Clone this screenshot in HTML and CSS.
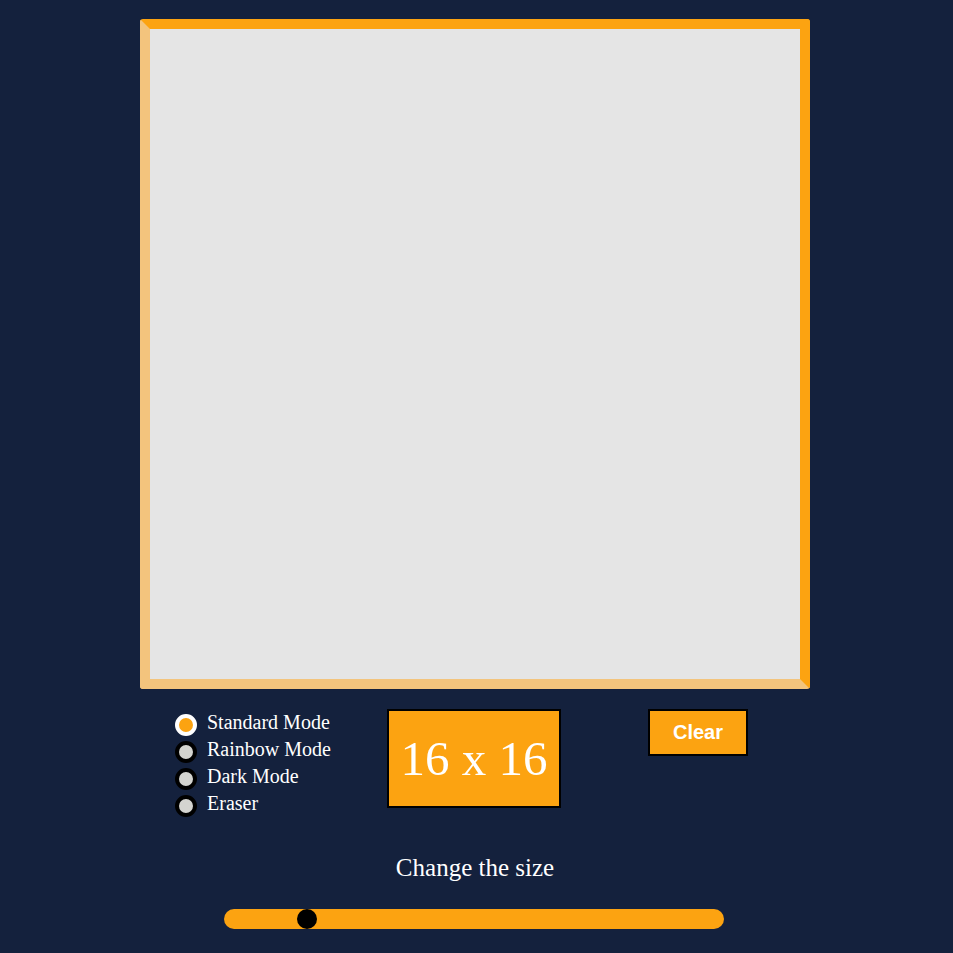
FILE: index.html
```html
<!DOCTYPE html>
<html lang="en">
<head>
<meta charset="utf-8">
<title>Etch-a-Sketch</title>
<link rel="stylesheet" href="styles.css">
</head>
<body>
<main class="app">
  <div class="board"></div>
  <div class="controls">
    <div class="modes">
      <label class="mode"><input type="radio" name="mode" checked><span>Standard Mode</span></label>
      <label class="mode"><input type="radio" name="mode"><span>Rainbow Mode</span></label>
      <label class="mode"><input type="radio" name="mode"><span>Dark Mode</span></label>
      <label class="mode"><input type="radio" name="mode"><span>Eraser</span></label>
    </div>
    <div class="count">16 x 16</div>
    <button class="clear">Clear</button>
  </div>
  <p class="size-label">Change the size</p>
  <div class="slider-row">
    <input class="slider" type="range" min="1" max="100" value="16">
  </div>
</main>
</body>
</html>
```
FILE: styles.css
```css
html, body {
  margin: 0;
  background: #14213d;
}
body {
  font-family: "Liberation Serif", "Times New Roman", serif;
  color: #ffffff;
}
.app {
  width: 670px;
  margin-left: 140px;
  padding-top: 19px;
}
.board {
  box-sizing: border-box;
  width: 670px;
  height: 670px;
  border: 10px solid;
  border-color: #fca311 #fca311 #f3c47d #f3c47d;
  border-radius: 3px;
  background: #e5e5e5;
}
.controls {
  display: flex;
  align-items: flex-start;
  margin-top: 20px;
  padding-left: 35px;
}
.modes {
  width: 212px;
  padding-top: 2px;
}
.mode {
  display: flex;
  align-items: flex-start;
  height: 27px;
  font-size: 20px;
  line-height: 23px;
}
.mode input {
  appearance: none;
  -webkit-appearance: none;
  box-sizing: border-box;
  width: 22px;
  height: 22px;
  margin: 3px 10px 0 0;
  border: 4px solid #000;
  border-radius: 50%;
  background: #d4d4d0;
}
.mode input:checked {
  border-color: #ffffff;
  background: #fca311;
}
.count {
  box-sizing: border-box;
  width: 174px;
  height: 99px;
  border: 2px solid #000;
  background: #fca311;
  display: flex;
  align-items: center;
  justify-content: center;
  font-size: 49px;
  color: #fff;
}
.clear {
  box-sizing: border-box;
  width: 100px;
  height: 47px;
  margin-left: 87px;
  border: 2px solid #000;
  background: #fca311;
  color: #fff;
  font-family: "Liberation Sans", Arial, sans-serif;
  font-weight: bold;
  font-size: 20px;
  padding: 0;
}
.size-label {
  margin: 34px 0 0;
  text-align: center;
  font-size: 25px;
  line-height: 29px;
}
.slider-row {
  display: flex;
  justify-content: center;
  margin-top: 27px;
  padding-right: 2px;
}
.slider {
  appearance: none;
  -webkit-appearance: none;
  width: 500px;
  height: 20px;
  margin: 0;
  border-radius: 10px;
  background: #fca311;
  outline: none;
}
.slider::-webkit-slider-thumb {
  -webkit-appearance: none;
  appearance: none;
  width: 20px;
  height: 20px;
  border-radius: 50%;
  background: #000;
  border: none;
}
```
